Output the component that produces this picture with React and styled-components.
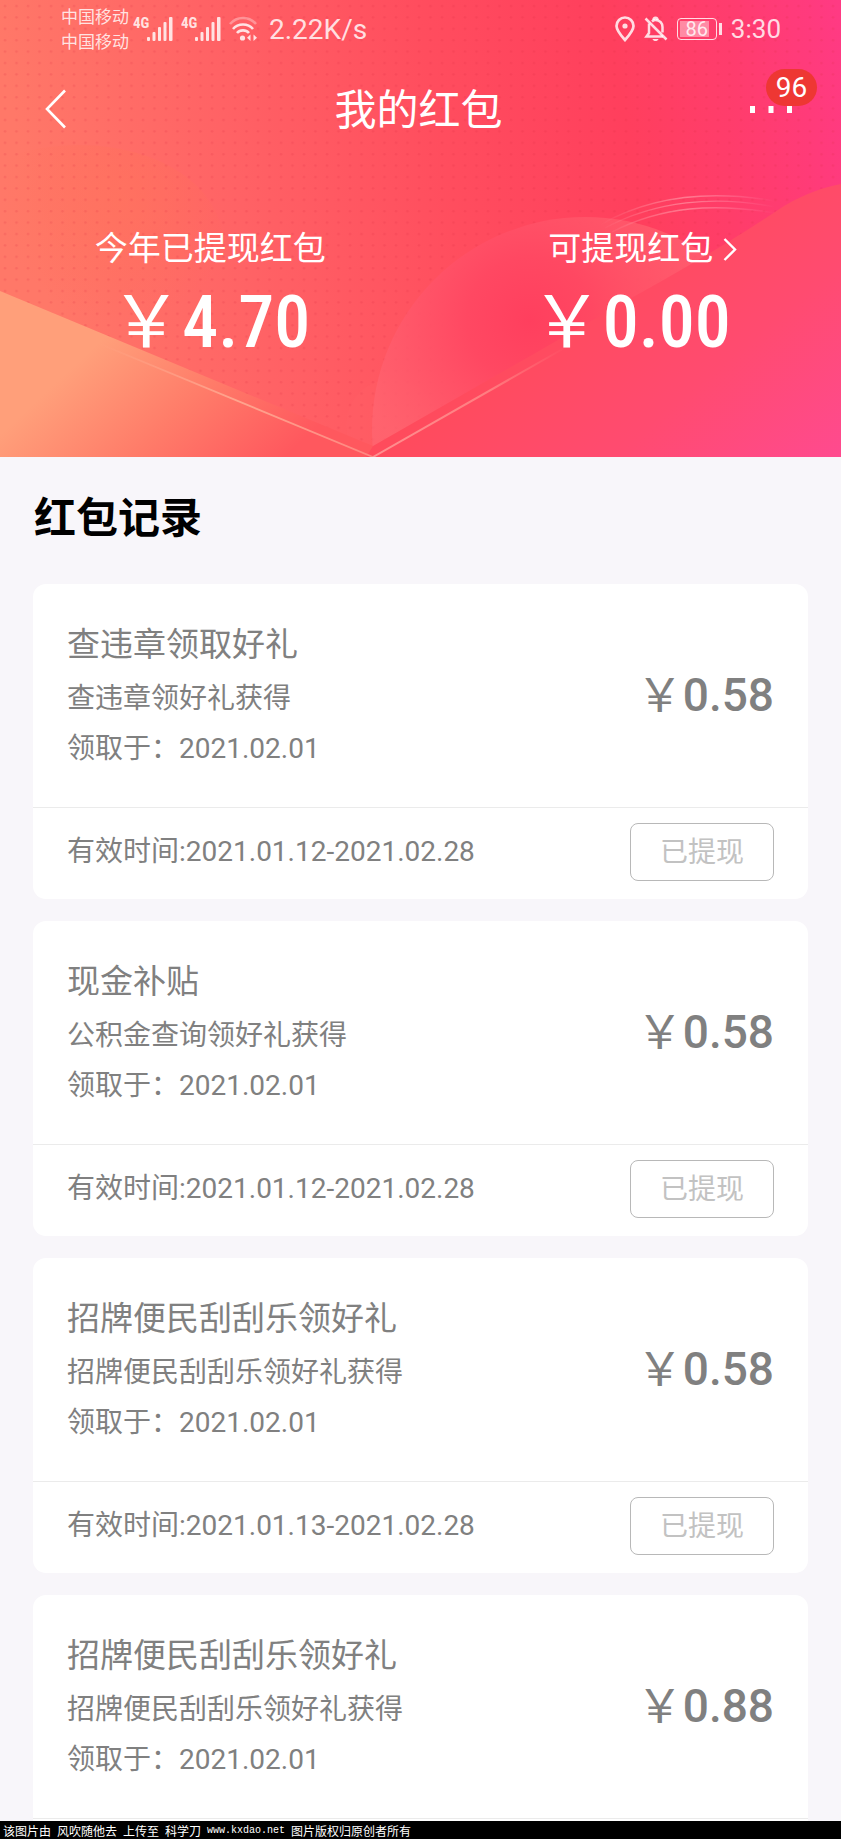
import React from "react";
import styled, { createGlobalStyle } from "styled-components";

const records = [
  {
    id: 1,
    title: "查违章领取好礼",
    desc: "查违章领好礼获得",
    received: "2021.02.01",
    valid: "2021.01.12-2021.02.28",
    amount: "0.58",
  },
  {
    id: 2,
    title: "现金补贴",
    desc: "公积金查询领好礼获得",
    received: "2021.02.01",
    valid: "2021.01.12-2021.02.28",
    amount: "0.58",
  },
  {
    id: 3,
    title: "招牌便民刮刮乐领好礼",
    desc: "招牌便民刮刮乐领好礼获得",
    received: "2021.02.01",
    valid: "2021.01.13-2021.02.28",
    amount: "0.58",
  },
  {
    id: 4,
    title: "招牌便民刮刮乐领好礼",
    desc: "招牌便民刮刮乐领好礼获得",
    received: "2021.02.01",
    valid: null,
    amount: "0.88",
  },
];

const HeroArt = () => (
  <Art viewBox="0 0 841 457" preserveAspectRatio="none" aria-hidden="true">
    <defs>
      <linearGradient id="base" x1="0" y1="0.1" x2="1" y2="0">
        <stop offset="0" stopColor="#ff7868" />
        <stop offset="0.25" stopColor="#ff6265" />
        <stop offset="0.5" stopColor="#ff4d5e" />
        <stop offset="0.72" stopColor="#ff3f5d" />
        <stop offset="0.88" stopColor="#ff3c70" />
        <stop offset="1" stopColor="#ff3a84" />
      </linearGradient>
      <pattern id="dots" x="0" y="0" width="11.5" height="11.4" patternUnits="userSpaceOnUse">
        <circle cx="5" cy="6" r="1.3" fill="#d8283c" fillOpacity="0.18" />
      </pattern>
      <radialGradient id="blob" gradientUnits="userSpaceOnUse" cx="120" cy="200" r="120">
        <stop offset="0" stopColor="#ff7658" stopOpacity="0.45" />
        <stop offset="1" stopColor="#ff7050" stopOpacity="0" />
      </radialGradient>
      <radialGradient id="disc" gradientUnits="userSpaceOnUse" cx="530" cy="320" r="180">
        <stop offset="0" stopColor="#ff3f5e" />
        <stop offset="0.35" stopColor="#ff4862" />
        <stop offset="1" stopColor="#ff6672" stopOpacity="0.7" />
      </radialGradient>
      <linearGradient id="left" gradientUnits="userSpaceOnUse" x1="80" y1="360" x2="224" y2="514">
        <stop offset="0" stopColor="#ff9f7a" />
        <stop offset="0.5" stopColor="#ff7c69" />
        <stop offset="1" stopColor="#ff585e" />
      </linearGradient>
      <linearGradient id="right" gradientUnits="userSpaceOnUse" x1="580" y1="270" x2="790" y2="520">
        <stop offset="0" stopColor="#ff4b5b" />
        <stop offset="0.5" stopColor="#ff4b70" />
        <stop offset="1" stopColor="#ff4a92" />
      </linearGradient>
      <linearGradient id="edgeLeft" gradientUnits="userSpaceOnUse" x1="100" y1="0" x2="373" y2="0">
        <stop offset="0" stopColor="#ffb498" stopOpacity="0" />
        <stop offset="0.5" stopColor="#ffa58e" />
        <stop offset="1" stopColor="#ff8580" />
      </linearGradient>
      <linearGradient id="edgeRight" gradientUnits="userSpaceOnUse" x1="373" y1="0" x2="568" y2="0">
        <stop offset="0" stopColor="#ff9090" />
        <stop offset="0.6" stopColor="#ff7d80" />
        <stop offset="1" stopColor="#ff7078" stopOpacity="0" />
      </linearGradient>
      <linearGradient id="rings" gradientUnits="userSpaceOnUse" x1="600" y1="0" x2="775" y2="0">
        <stop offset="0" stopColor="#ff9aa8" stopOpacity="0" />
        <stop offset="0.5" stopColor="#ff8a9c" stopOpacity="0.8" />
        <stop offset="1" stopColor="#ff8ab0" stopOpacity="0" />
      </linearGradient>
    </defs>
    <rect width="841" height="457" fill="url(#base)" />
    <path d="M0 160C70 132 150 146 190 180C235 215 240 290 210 380H0Z" fill="url(#blob)" />
    <rect width="841" height="457" fill="url(#dots)" />
    <circle cx="392" cy="425" r="46" fill="#ff6468" fillOpacity="0.2" />
    <circle cx="585" cy="430" r="213" fill="url(#disc)" />
    <g fill="none" stroke="url(#rings)" strokeWidth="1.4">
      <path d="M600 225C650 196 710 190 775 201" />
      <path d="M605 228C655 201 715 195 775 207" />
      <path d="M612 232C662 206 715 203 775 213" />
    </g>
    <path d="M0 291L373 446L385 457H0Z" fill="url(#left)" />
    <path
      d="M373 446L633 297C700 260 745 232 784 206C806 193 822 188 841 184V457H366Z"
      fill="url(#right)"
    />
    <path d="M100 344L373 457" stroke="url(#edgeLeft)" strokeWidth="1.8" />
    <path d="M373 457L568 346" stroke="url(#edgeRight)" strokeWidth="2" />
  </Art>
);

const Signal = () => (
  <svg width="40" height="28" viewBox="0 0 40 28" fill="currentColor">
    <text x="0" y="13" fontSize="15" fontWeight="700" fontFamily="Roboto Condensed, Liberation Sans Narrow, sans-serif">
      4G
    </text>
    <rect x="14" y="22" width="3" height="4" rx="1" />
    <rect x="19.500" y="17" width="3" height="9" rx="1" />
    <rect x="25" y="12" width="3" height="14" rx="1" />
    <rect x="30.500" y="7" width="3" height="19" rx="1" />
    <rect x="36" y="2" width="3.500" height="24" rx="1" />
  </svg>
);

const Wifi = () => (
  <svg width="28" height="28" viewBox="0 0 28 28" fill="none" stroke="currentColor" strokeWidth="2.6">
    <path d="M1 9C8 1 20 1 27 9" opacity="0.4" />
    <path d="M4 14C9 8 19 8 24 14" />
    <path d="M8 18C11 14.5 17 14.5 20 18" />
    <circle cx="13.5" cy="23" r="2.6" fill="currentColor" stroke="none" />
    <path d="M21.5 19.5V26L18 22.8ZM24.5 19.5L28 22.8L24.5 26Z" fill="currentColor" stroke="none" />
  </svg>
);

const Pin = () => (
  <svg width="20" height="26" viewBox="0 0 20 26" fill="none" stroke="currentColor" strokeWidth="2.7">
    <path d="M10 24C5.500 19 1.500 14 1.500 10A8.500 8.500 0 0 1 18.500 10C18.500 14 14.500 19 10 24Z" />
    <circle cx="10" cy="10" r="2.6" fill="currentColor" stroke="none" />
  </svg>
);

const BellOff = () => (
  <svg width="24" height="26" viewBox="0 0 24 26" fill="none" stroke="currentColor" strokeWidth="2.5">
    <path d="M1.500 2.500L22.500 23.500" />
    <path d="M5 7.500V17L2.500 20.500H19" />
    <path d="M8 5.500C9 4.500 10 4 11.500 4C16 4 18.500 7.500 18.500 11V16.500" />
    <path d="M9.500 4C9.500 1 13.500 1 13.500 4" />
    <path d="M8.500 23C9.500 25.800 13.500 25.800 14.500 23" fill="currentColor" stroke="none" />
  </svg>
);

const RecordCard = ({ record }) => (
  <Card>
    <CardBody>
      <div>
        <CardTitle>{record.title}</CardTitle>
        <CardLine>{record.desc}</CardLine>
        <CardLine>领取于：{record.received}</CardLine>
      </div>
      <CardAmount>
        ￥<Digits>{record.amount}</Digits>
      </CardAmount>
    </CardBody>
    <CardFooter>
      {record.valid && (
        <>
          <Validity>有效时间:{record.valid}</Validity>
          <StatusButton type="button">已提现</StatusButton>
        </>
      )}
    </CardFooter>
  </Card>
);

const App = () => {
  return (
    <Screen>
      <GlobalStyle />
      <Hero>
        <HeroArt />
        <StatusBar>
          <Carriers>
            <span>中国移动</span>
            <span>中国移动</span>
          </Carriers>
          <Icons>
            <Signal />
            <Signal />
            <Wifi />
          </Icons>
          <Speed>2.22K/s</Speed>
          <SystemIcons>
            <Pin />
            <BellOff />
            <Battery>
              <BatteryLevel>86</BatteryLevel>
            </Battery>
            <Clock>3:30</Clock>
          </SystemIcons>
        </StatusBar>
        <NavBar>
          <IconButton type="button" aria-label="返回">
            <svg width="21" height="40" viewBox="0 0 21 40" fill="none" stroke="#fff" strokeWidth="2.6">
              <path d="M20 1.500L2 20L20 38.500" />
            </svg>
          </IconButton>
          <PageTitle>我的红包</PageTitle>
          <MoreButton type="button" aria-label="更多">
            <svg width="42" height="7" viewBox="0 0 42 7" fill="#fff">
              <rect x="0" width="5" height="7" />
              <rect x="18.500" width="5" height="7" />
              <rect x="37" width="5" height="7" />
            </svg>
            <Badge>96</Badge>
          </MoreButton>
        </NavBar>
        <Stats>
          <Stat>
            <StatLabel>今年已提现红包</StatLabel>
            <StatAmount>
              ￥<Digits>4.70</Digits>
            </StatAmount>
          </Stat>
          <Stat>
            <StatLink href="#withdraw">
              可提现红包
              <svg width="14" height="24" viewBox="0 0 14 24" fill="none" stroke="#fff" strokeWidth="2.4">
                <path d="M1.500 2L12 12.500L1.500 23" />
              </svg>
            </StatLink>
            <StatAmount>
              ￥<Digits>0.00</Digits>
            </StatAmount>
          </Stat>
        </Stats>
      </Hero>
      <Records>
        <SectionTitle>红包记录</SectionTitle>
        {records.map((record) => (
          <RecordCard key={record.id} record={record} />
        ))}
      </Records>
      <Credit>
        <span>该图片由</span>
        <span>风吹随他去</span>
        <span>上传至</span>
        <span>科学刀</span>
        <Site>www.kxdao.net</Site>
        <span>图片版权归原创者所有</span>
      </Credit>
    </Screen>
  );
};

const GlobalStyle = createGlobalStyle`
  * {
    box-sizing: border-box;
  }
  body {
    margin: 0;
    background: #f8f6fa;
    font-family: Roboto, "Noto Sans CJK SC", sans-serif;
  }
  button {
    font-family: inherit;
    cursor: pointer;
  }
`;
const Screen = styled.div`
  display: flex;
  flex-direction: column;
  height: 100vh;
  overflow: hidden;
`;
const Hero = styled.header`
  position: relative;
  flex-shrink: 0;
  color: #fff;
  padding-bottom: 88px;
`;
const Art = styled.svg`
  position: absolute;
  inset: 0;
  width: 100%;
  height: 100%;
  z-index: -1;
`;
const StatusBar = styled.div`
  display: flex;
  align-items: center;
  height: 58px;
  padding: 0 60px 0 61px;
  color: rgba(255, 255, 255, 0.82);
`;
const Carriers = styled.div`
  display: flex;
  flex-direction: column;
  padding-top: 2px;
  font-size: 17px;
  line-height: 25px;
`;
const Icons = styled.div`
  display: flex;
  gap: 8px;
  margin-left: 4px;
`;
const Speed = styled.span`
  font-size: 28px;
  margin-left: 12px;
`;
const SystemIcons = styled.div`
  display: flex;
  align-items: center;
  gap: 9px;
  margin-left: auto;
`;
const Battery = styled.div`
  display: flex;
  width: 40px;
  height: 22px;
  padding: 2px;
  margin-right: 5px;
  border: 1px solid currentColor;
  border-radius: 4px;
  position: relative;
  &::after {
    content: "";
    position: absolute;
    right: -6px;
    top: 4px;
    width: 3px;
    height: 12px;
    background: currentColor;
  }
`;
const BatteryLevel = styled.span`
  flex: 1;
  background: linear-gradient(90deg, rgba(255, 255, 255, 0.4) 86%, transparent 86%);
  font-size: 20px;
  line-height: 17px;
  text-align: center;
`;
const Clock = styled.span`
  font-size: 26px;
`;
const NavBar = styled.nav`
  display: flex;
  align-items: center;
  justify-content: space-between;
  height: 102px;
  padding: 0 49px 0 45px;
`;
const IconButton = styled.button`
  display: flex;
  width: 42px;
  padding: 0;
  border: none;
  background: none;
`;
const MoreButton = styled(IconButton)`
  position: relative;
`;
const Badge = styled.span`
  position: absolute;
  left: 16px;
  bottom: 7px;
  width: 51px;
  border-radius: 19px;
  background: #ee3733;
  color: #fff;
  font-size: 28px;
  line-height: 37px;
  text-align: center;
`;
const PageTitle = styled.h1`
  margin: 0;
  padding-top: 4px;
  font-size: 42px;
  font-weight: 400;
  line-height: 50px;
`;
const Stats = styled.div`
  display: flex;
  padding-top: 65px;
`;
const Stat = styled.div`
  flex: 1;
  display: flex;
  flex-direction: column;
  align-items: center;
  gap: 3px;
`;
const StatLabel = styled.span`
  font-size: 33px;
  line-height: 48px;
`;
const StatLink = styled.a`
  display: flex;
  align-items: center;
  gap: 10px;
  padding-left: 24px;
  color: inherit;
  font-size: 33px;
  line-height: 48px;
  text-decoration: none;
`;
const Digits = styled.span`
  font-weight: 500;
`;
const StatAmount = styled.div`
  font-family: "Roboto Condensed", Roboto, "Noto Sans CJK SC", sans-serif;
  font-size: 72px;
  line-height: 93px;
`;
const Records = styled.main`
  flex: 1;
  min-height: 0;
  display: flex;
  flex-direction: column;
  gap: 22px;
  padding: 0 33px;
  overflow-y: auto;
  scrollbar-width: none;
`;
const SectionTitle = styled.h2`
  margin: 0;
  padding: 31px 1px 12px;
  font-size: 42px;
  line-height: 62px;
  color: #000;
`;
const Card = styled.section`
  flex-shrink: 0;
  border-radius: 13px;
  background: #fff;
  color: #808080;
`;
const CardBody = styled.div`
  display: flex;
  justify-content: space-between;
  padding: 32px 34px 33px;
  border-bottom: 1px solid #ebebeb;
`;
const CardTitle = styled.h3`
  margin: 0;
  font-size: 33px;
  font-weight: 400;
  line-height: 58px;
`;
const CardLine = styled.p`
  margin: 0;
  font-size: 28px;
  line-height: 50px;
`;
const CardAmount = styled.span`
  font-size: 46px;
  line-height: 158px;
`;
const CardFooter = styled.div`
  display: flex;
  align-items: center;
  justify-content: space-between;
  min-height: 91px;
  padding: 15px 34px 18px;
`;
const Validity = styled.span`
  font-size: 28px;
  line-height: 50px;
`;
const StatusButton = styled.button`
  width: 144px;
  height: 58px;
  padding: 2px 0 0;
  border: 1px solid #b8b8b8;
  border-radius: 8px;
  background: #fff;
  color: #c2c2c2;
  font-size: 28px;
  line-height: 50px;
`;
const Credit = styled.footer`
  flex-shrink: 0;
  display: flex;
  align-items: center;
  gap: 6px;
  height: 18px;
  padding: 0 3px;
  background: #000;
  color: #fff;
  font-size: 12px;
`;
const Site = styled.span`
  font-family: "Liberation Mono", monospace;
  font-size: 10px;
`;

export default App;
